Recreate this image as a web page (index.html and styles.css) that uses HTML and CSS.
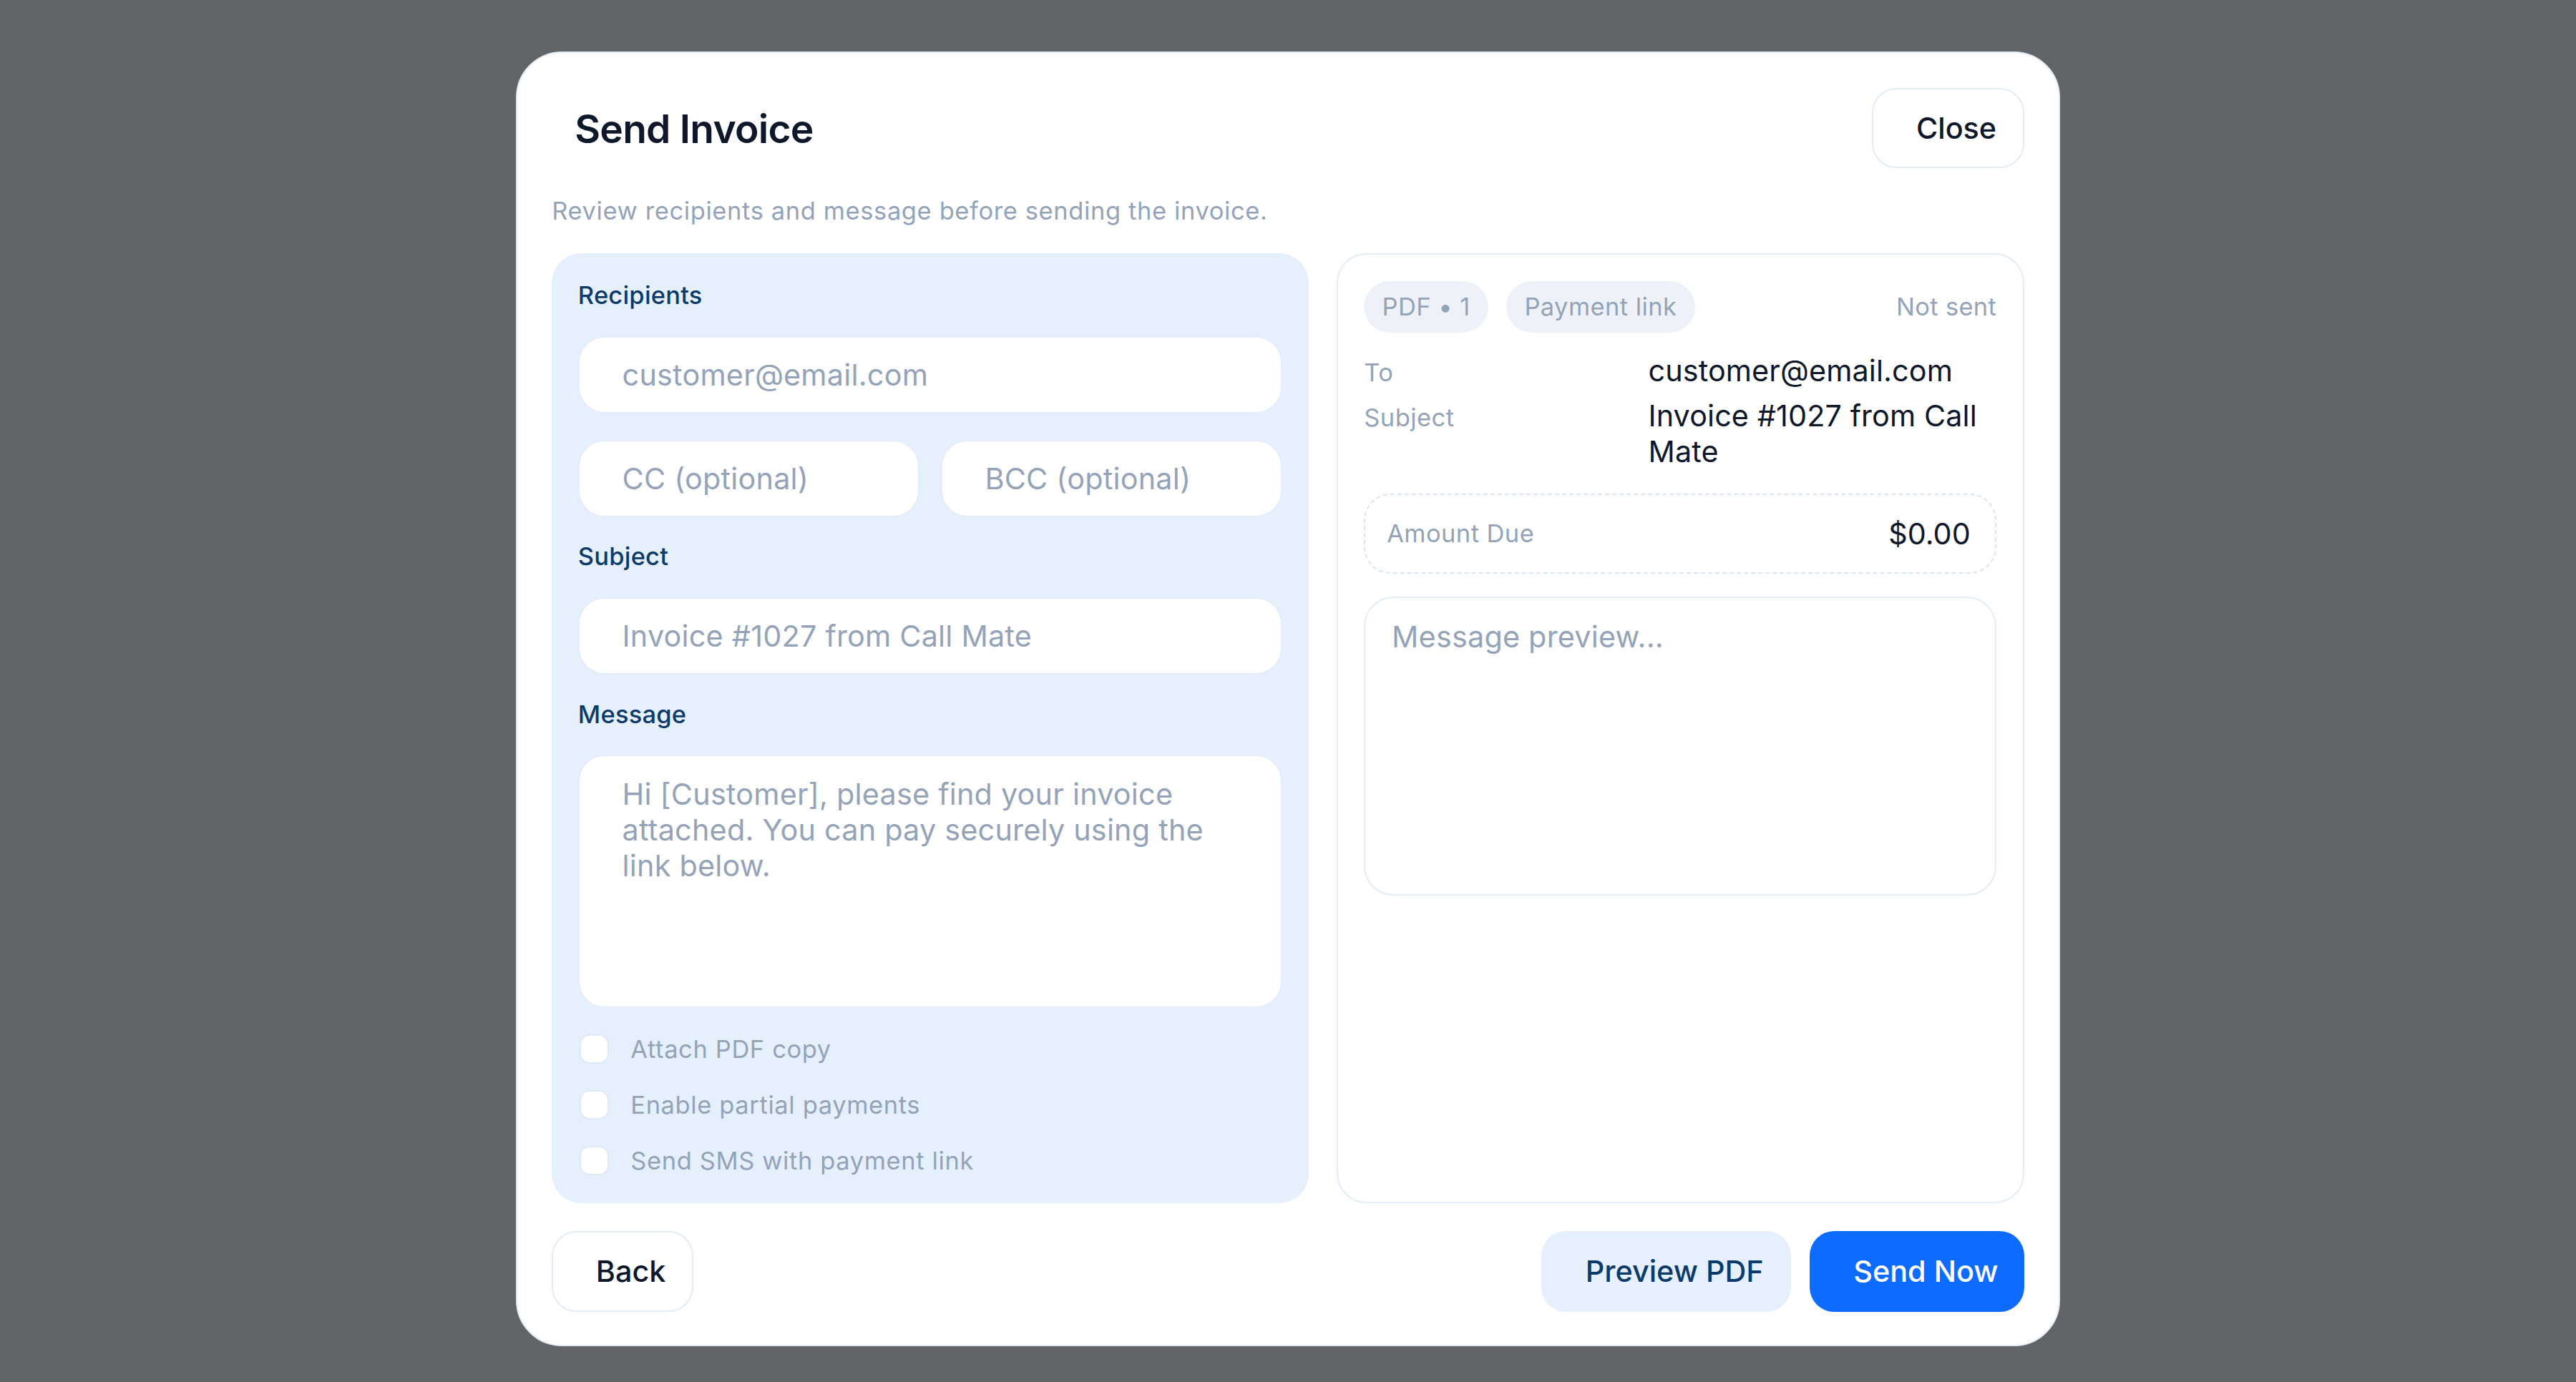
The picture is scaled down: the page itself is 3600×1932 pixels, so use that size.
FILE: index.html
```html
<!DOCTYPE html>
<html lang="en">
<head>
<meta charset="utf-8">
<title>Send Invoice</title>
<link rel="stylesheet" href="styles.css">
</head>
<body>
<div class="overlay">
  <div class="modal" role="dialog" aria-labelledby="modal-title">
    <header class="modal-header">
      <h1 class="modal-title" id="modal-title">Send Invoice</h1>
      <button class="btn btn-outline" type="button">Close</button>
    </header>
    <p class="modal-subtitle">Review recipients and message before sending the invoice.</p>

    <div class="panels">
      <section class="compose">
        <div class="label">Recipients</div>
        <div class="field">customer@email.com</div>
        <div class="field-row">
          <div class="field">CC (optional)</div>
          <div class="field">BCC (optional)</div>
        </div>
        <div class="label">Subject</div>
        <div class="field">Invoice #1027 from Call Mate</div>
        <div class="label">Message</div>
        <div class="field field-area">Hi [Customer], please find your invoice attached. You can pay securely using the link below.</div>
        <ul class="options">
          <li class="option"><span class="checkbox"></span><span>Attach PDF copy</span></li>
          <li class="option"><span class="checkbox"></span><span>Enable partial payments</span></li>
          <li class="option"><span class="checkbox"></span><span>Send SMS with payment link</span></li>
        </ul>
      </section>

      <section class="preview">
        <div class="chips">
          <span class="chip">PDF • 1</span>
          <span class="chip">Payment link</span>
          <span class="status">Not sent</span>
        </div>
        <dl class="info">
          <dt>To</dt>
          <dd>customer@email.com</dd>
          <dt>Subject</dt>
          <dd>Invoice #1027 from Call Mate</dd>
        </dl>
        <div class="amount">
          <span class="amount-label">Amount Due</span>
          <span class="amount-value">$0.00</span>
        </div>
        <div class="message-preview">Message preview...</div>
      </section>
    </div>

    <footer class="modal-footer">
      <button class="btn btn-outline" type="button">Back</button>
      <div class="footer-actions">
        <button class="btn btn-soft" type="button">Preview PDF</button>
        <button class="btn btn-primary" type="button">Send Now</button>
      </div>
    </footer>
  </div>
</div>
</body>
</html>
```

FILE: styles.css
```css
html {
  zoom: 2.295918;
}

body {
  margin: 0;
  background: #636467;
  font-family: Inter, "Noto Sans", "Liberation Sans", sans-serif;
  color: #0f172a;
}

.overlay {
  min-height: 841px;
  box-sizing: border-box;
  padding-top: 31.5px;
  display: flex;
  justify-content: center;
  align-items: flex-start;
}

.modal {
  width: 940px;
  box-sizing: border-box;
  background: #ffffff;
  border: 1px solid #e3ebf6;
  border-radius: 28px;
  padding: 21px 21px 20px;
  display: flex;
  flex-direction: column;
  gap: 17px;
}

.modal-header {
  display: flex;
  justify-content: space-between;
  align-items: center;
}

.modal-title {
  margin: 1px 0 0 14px;
  font-size: 24px;
  font-weight: 600;
  line-height: normal;
  letter-spacing: -0.33px;
  color: #0f172a;
}

.modal-subtitle {
  margin: 0;
  font-size: 15px;
  line-height: normal;
  letter-spacing: 0.28px;
  color: #94a3b8;
}

/* Buttons */
.btn {
  height: 49px;
  box-sizing: border-box;
  padding: 0 16px 0 26px;
  border: 1px solid transparent;
  border-radius: 15px;
  font-family: inherit;
  font-size: 18px;
  font-weight: 500;
  line-height: 22px;
  cursor: pointer;
}

.btn-outline {
  background: #ffffff;
  border-color: #e3ecf7;
  color: #0f172a;
}

.btn-soft {
  background: #e6f0fd;
  color: #0b3a6b;
}

.btn-primary {
  background: #0d6bff;
  color: #ffffff;
  padding-right: 15px;
}

/* Panels */
.panels {
  display: grid;
  grid-template-columns: 1.1fr 1fr;
  gap: 17px;
}

.compose {
  background: #e6f0fd;
  border-radius: 18px;
  padding: 15px 16px;
  display: flex;
  flex-direction: column;
  gap: 13.5px;
}

.label {
  font-size: 15px;
  font-weight: 500;
  line-height: 22px;
  letter-spacing: 0.1px;
  color: #0b3a6b;
}

.field {
  height: 47px;
  box-sizing: border-box;
  background: #ffffff;
  border: 1px solid #e4edf9;
  border-radius: 16px;
  padding: 0 25px 0 26px;
  display: flex;
  align-items: center;
  font-size: 18px;
  line-height: normal;
  letter-spacing: 0.1px;
  color: #94a3b8;
}

.field-row {
  display: grid;
  grid-template-columns: 1fr 1fr;
  gap: 13px;
  margin-top: 2.5px;
}

.field-area {
  height: 154px;
  align-items: flex-start;
  padding: 12px 25px 12px 26px;
}

.options {
  list-style: none;
  margin: 0.5px 0 0;
  padding: 0;
  display: flex;
  flex-direction: column;
  gap: 12px;
}

.option {
  height: 22px;
  display: flex;
  align-items: center;
  gap: 13px;
  font-size: 15px;
  letter-spacing: 0.28px;
  color: #94a3b8;
}

.checkbox {
  width: 18px;
  height: 18px;
  box-sizing: border-box;
  margin-left: 1px;
  background: #ffffff;
  border: 1px solid #dfe9f7;
  border-radius: 6px;
  flex: none;
}

/* Preview */
.preview {
  background: #ffffff;
  border: 1px solid #e3ecf7;
  border-radius: 18px;
  padding: 16px;
  display: flex;
  flex-direction: column;
}

.chips {
  display: flex;
  align-items: center;
  gap: 11px;
}

.chip {
  height: 31.5px;
  box-sizing: border-box;
  padding: 0 11px;
  border-radius: 999px;
  background: #eef2f8;
  display: inline-flex;
  align-items: center;
  font-size: 15px;
  letter-spacing: 0.2px;
  color: #94a3b8;
}

.status {
  margin-left: auto;
  font-size: 15px;
  letter-spacing: 0.15px;
  color: #94a3b8;
}

.info {
  margin: 12px 0 0;
  display: grid;
  grid-template-columns: 161px 1fr;
  column-gap: 12px;
  row-gap: 6px;
  align-items: baseline;
}

.info dt {
  font-size: 15px;
  letter-spacing: 0.2px;
  color: #94a3b8;
}

.info dd {
  margin: 0;
  font-size: 18px;
  line-height: normal;
  letter-spacing: 0.05px;
  color: #0f172a;
}

.amount {
  margin-top: 14.5px;
  height: 49px;
  box-sizing: border-box;
  border: 1px dashed #dbe5f2;
  border-radius: 16px;
  padding: 0 15px 0 13px;
  display: flex;
  justify-content: space-between;
  align-items: center;
}

.amount-label {
  font-size: 15px;
  letter-spacing: 0.2px;
  color: #94a3b8;
}

.amount-value {
  font-size: 18px;
  color: #0f172a;
}

.message-preview {
  margin-top: 14px;
  height: 182px;
  box-sizing: border-box;
  border: 1px solid #e3ecf7;
  border-radius: 18px;
  padding: 12.5px 16px;
  font-size: 18px;
  line-height: normal;
  letter-spacing: 0.1px;
  color: #94a3b8;
}

/* Footer */
.modal-footer {
  display: flex;
  justify-content: space-between;
  align-items: center;
}

.footer-actions {
  display: flex;
  gap: 11px;
}
```
